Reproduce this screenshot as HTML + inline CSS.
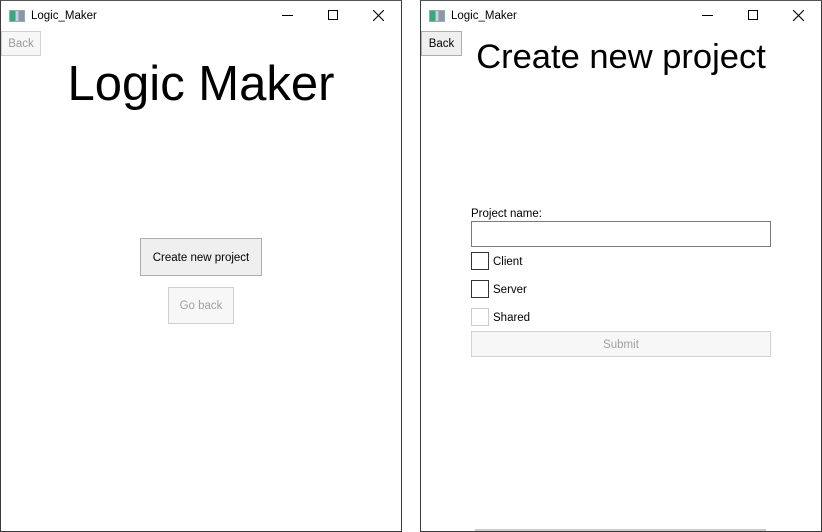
<!DOCTYPE html>
<html><head><meta charset="utf-8"><style>
*{margin:0;padding:0;box-sizing:border-box}
body{width:822px;height:532px;background:#fff;position:relative;overflow:hidden;font-family:"Segoe UI","Liberation Sans",sans-serif;}
.win{position:absolute;top:0;width:402px;height:532px;background:#fff;border:1px solid #3a3a3a;border-top:1px solid #555;}
.t{position:absolute;font-size:11.5px;line-height:15px;color:#000;white-space:nowrap}
.ico{position:absolute;left:8px;top:9px;width:16px;height:12px;border:1px solid #9aa;background:linear-gradient(90deg,#3a7 0,#3a7 40%,#ccd 40%,#ccd 60%,#89a 60%);}
.ctl{position:absolute;top:14px;width:12px;height:12px}
.btn{position:absolute;border:1px solid #adadad;background:#efefef;font-size:11.5px;display:flex;align-items:center;justify-content:center;color:#000;padding-top:1px}
.dis{border-color:#d0d0d0;background:#f7f7f7;color:#a0a0a0}
.cb{position:absolute;width:18px;height:18px;border:1px solid #333;background:#fff}
</style></head><body>
<div class="win" style="left:0">
  <div class="ico"></div>
  <div class="t" style="left:30px;top:8px">Logic_Maker</div>
  <div class="ctl" style="left:281px;top:14px;height:1px;border-top:1px solid #000;width:11px"></div>
  <div class="ctl" style="left:327px;top:9px;width:10px;height:10px;border:1px solid #000"></div>
  <svg style="position:absolute;left:372px;top:9px" width="11" height="11"><path d="M0 0L11 11M11 0L0 11" stroke="#000" stroke-width="1.1"/></svg>
  <div class="btn dis" style="left:0;top:30px;width:40px;height:25px;color:#9a9a9a">Back</div>
  <div class="t" style="left:0;width:400px;text-align:center;top:53px;font-size:49px;line-height:60px;font-weight:300">Logic Maker</div>
  <div class="btn" style="left:139px;top:237px;width:122px;height:38px">Create new project</div>
  <div class="btn dis" style="left:167px;top:286px;width:66px;height:37px">Go back</div>
</div>
<div class="win" style="left:420px">
  <div class="ico"></div>
  <div class="t" style="left:30px;top:8px">Logic_Maker</div>
  <div class="ctl" style="left:281px;top:14px;height:1px;border-top:1px solid #000;width:11px"></div>
  <div class="ctl" style="left:327px;top:9px;width:10px;height:10px;border:1px solid #000"></div>
  <svg style="position:absolute;left:372px;top:9px" width="11" height="11"><path d="M0 0L11 11M11 0L0 11" stroke="#000" stroke-width="1.1"/></svg>
  <div class="btn" style="left:0;top:30px;width:41px;height:25px">Back</div>
  <div class="t" style="left:0;width:400px;text-align:center;top:35px;font-size:34.5px;line-height:42px;font-weight:300">Create new project</div>
  <div class="t" style="left:50px;top:206px">Project name:</div>
  <div style="position:absolute;left:50px;top:220px;width:300px;height:26px;border:1px solid #7a7a7a"></div>
  <div class="cb" style="left:50px;top:251px"></div><div class="t" style="left:72px;top:254px">Client</div>
  <div class="cb" style="left:50px;top:279px"></div><div class="t" style="left:72px;top:282px">Server</div>
  <div class="cb" style="left:50px;top:307px;border-color:#ccc"></div><div class="t" style="left:72px;top:310px">Shared</div>
  <div class="btn dis" style="left:50px;top:330px;width:300px;height:26px">Submit</div>
  <div style="position:absolute;left:54px;bottom:0;width:291px;height:2px;background:#ccc"></div>
</div>
</body></html>
